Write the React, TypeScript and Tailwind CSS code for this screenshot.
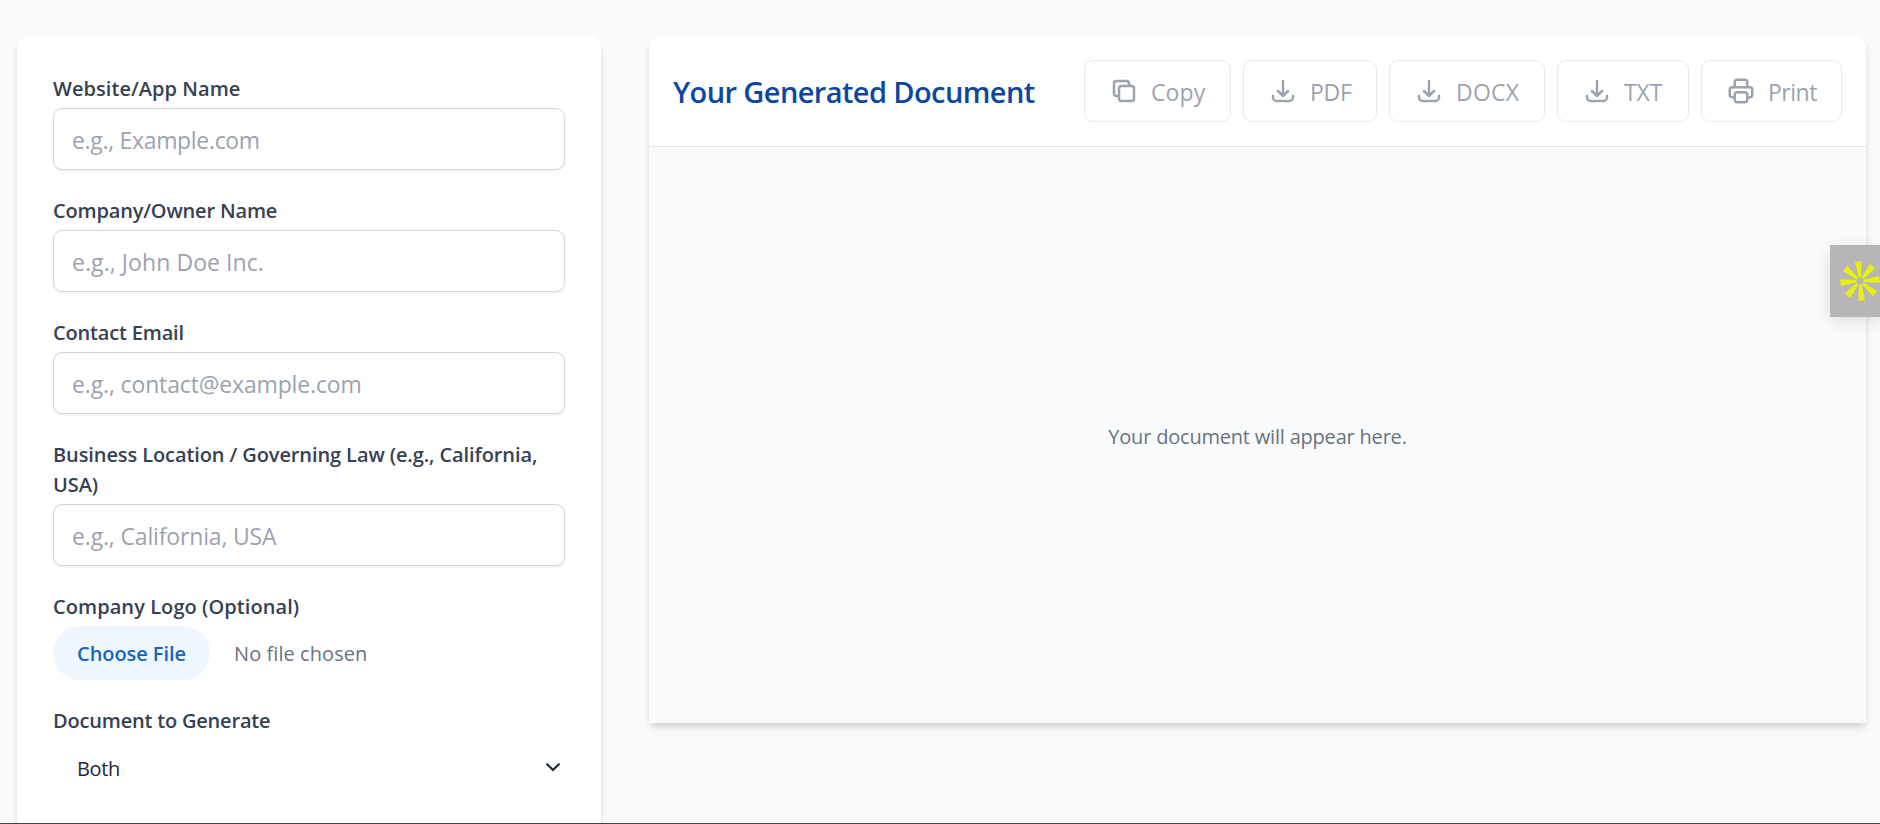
import React from 'react';

const COPY =
  'M8 16H6a2 2 0 01-2-2V6a2 2 0 012-2h8a2 2 0 012 2v2m-6 12h8a2 2 0 002-2v-8a2 2 0 00-2-2h-8a2 2 0 00-2 2v8a2 2 0 002 2z';
const DOWNLOAD = 'M4 16v1a3 3 0 003 3h10a3 3 0 003-3v-1m-4-4l-4 4m0 0l-4-4m4 4V4';
const PRINT =
  'M17 17h2a2 2 0 002-2v-4a2 2 0 00-2-2H5a2 2 0 00-2 2v4a2 2 0 002 2h2m2 4h6a2 2 0 002-2v-4a2 2 0 00-2-2H9a2 2 0 00-2 2v4a2 2 0 002 2zm8-12V5a2 2 0 00-2-2H9a2 2 0 00-2 2v4h10z';

const fields = [
  {
    id: 'site',
    label: 'Website/App Name',
    placeholder: 'e.g., Example.com',
    labelSpacing: 'tracking-[0.05px]',
    spacing: 'tracking-[-0.32px]',
  },
  {
    id: 'owner',
    label: 'Company/Owner Name',
    placeholder: 'e.g., John Doe Inc.',
    labelSpacing: 'tracking-[-0.17px]',
    spacing: 'tracking-[0.07px]',
  },
  {
    id: 'email',
    label: 'Contact Email',
    placeholder: 'e.g., contact@example.com',
    labelSpacing: 'tracking-[-0.17px]',
    spacing: 'tracking-[-0.14px]',
  },
  {
    id: 'location',
    label: 'Business Location / Governing Law (e.g., California, USA)',
    placeholder: 'e.g., California, USA',
    labelSpacing: 'tracking-[-0.1px]',
    spacing: 'tracking-[-0.16px]',
  },
];

const actions = [
  { name: 'Copy', icon: COPY, style: 'w-[147px] tracking-[0.1px]' },
  { name: 'PDF', icon: DOWNLOAD, style: 'w-[134px] tracking-[-0.3px]' },
  { name: 'DOCX', icon: DOWNLOAD, style: 'w-[156px] tracking-[0.2px]' },
  { name: 'TXT', icon: DOWNLOAD, style: 'w-[132px] tracking-[-0.1px]' },
  { name: 'Print', icon: PRINT, style: 'w-[141px] tracking-[-0.5px]' },
];

const labelClass = 'block pt-0.5 -mb-0.5 text-[20px] leading-[30px] font-semibold text-gray-700';

const GeneratorForm: React.FC = () => (
  <form className="w-[584px] h-[900px] shrink-0 flex flex-col gap-6 rounded-xl bg-white p-9 shadow-[0_6px_9px_-1px_rgba(0,0,0,0.1),0_3px_6px_-2px_rgba(0,0,0,0.1)]">
    {fields.map((field) => (
      <div key={field.id}>
        <label htmlFor={field.id} className={`${labelClass} ${field.labelSpacing}`}>
          {field.label}
        </label>
        <input
          id={field.id}
          type="text"
          placeholder={field.placeholder}
          className={`mt-1.5 block h-[62px] w-full rounded-[9px] border border-[#d1d5db] bg-white px-[18px] pt-0.5 text-[23px] shadow-[0_1.5px_3px_rgba(0,0,0,0.05)] placeholder:text-[#9ca3af] ${field.spacing}`}
        />
      </div>
    ))}

    <div>
      <span className={`${labelClass} tracking-[0.07px]`}>Company Logo (Optional)</span>
      <div className="mt-1.5 flex items-center gap-6 text-[20px] leading-[30px]">
        <button
          type="button"
          className="h-[54px] w-[157px] rounded-full bg-[#eff6ff] pt-0.5 font-semibold tracking-[-0.07px] text-[#1565c0]"
        >
          Choose File
        </button>
        <span className="pt-0.5 tracking-[0.07px] text-gray-500">No file chosen</span>
      </div>
    </div>

    <div>
      <span className={`${labelClass} tracking-[-0.19px]`}>Document to Generate</span>
      <div className="mt-1.5 flex h-[54px] items-center justify-between pr-[5px] pl-6 text-[20px] leading-[30px] tracking-[-0.4px] text-gray-800">
        <span className="pt-[3px]">Both</span>
        <svg
          viewBox="0 0 14 9"
          className="h-[9px] w-3.5"
          fill="none"
          stroke="currentColor"
          strokeWidth="2.2"
          strokeLinecap="round"
        >
          <path d="M1.2 1.2L7 7l5.8-5.8" />
        </svg>
      </div>
    </div>
  </form>
);

const DocumentPanel: React.FC = () => (
  <section className="flex h-[687px] w-[1217px] shrink-0 flex-col rounded-t-xl bg-white shadow-[0_6px_9px_-1px_rgba(0,0,0,0.1),0_3px_6px_-2px_rgba(0,0,0,0.1)]">
    <header className="flex items-center justify-between border-b border-gray-200 p-6">
      <h2 className="pt-0.5 text-[29px] leading-[42px] font-semibold tracking-[-0.6px] whitespace-nowrap text-[#0d47a1]">
        Your Generated Document
      </h2>
      <div className="flex gap-3">
        {actions.map((action) => (
          <button
            key={action.name}
            disabled
            className={`flex h-[62px] items-center gap-3 rounded-[9px] border border-[#d1d5db]/50 pl-6 text-[23px] whitespace-nowrap text-[#9ca3af] ${action.style}`}
          >
            <svg
              viewBox="0 0 24 24"
              className="size-[30px] shrink-0"
              fill="none"
              stroke="currentColor"
              strokeWidth="2"
              strokeLinecap="round"
              strokeLinejoin="round"
            >
              <path d={action.icon} />
            </svg>
            <span className="pt-0.5">{action.name}</span>
          </button>
        ))}
      </div>
    </header>
    <div className="flex flex-1 items-center justify-center bg-[#f9fafb]">
      <p className="pt-[3px] text-[20px] leading-[30px] tracking-[-0.2px] text-gray-500">
        Your document will appear here.
      </p>
    </div>
  </section>
);

// Burst logo: eight tapered rays around a small gap
const BurstBadge: React.FC = () => (
  <div className="absolute top-[245px] right-0 h-[72px] w-[50px] overflow-hidden bg-[#b8b5b9] shadow-[0_4px_16px_rgba(0,0,0,0.12)]">
    <svg viewBox="-20 -20 40 40" className="absolute top-4 left-[10px] size-10" fill="#e8f10c">
      {[0, 45, 90, 135, 180, 225, 270, 315].map((angle) => (
        <path key={angle} d="M-5 -19.2L1.6 -19.8L1.3 -5.2Q0.8 -2.4 -1.5 -3.8Z" transform={`rotate(${angle})`} />
      ))}
    </svg>
  </div>
);

const App: React.FC = () => {
  return (
    <div className="relative h-[824px] overflow-hidden border-b border-[#444] bg-[#f9fafb] font-['Open_Sans','Noto_Sans',sans-serif]">
      <main className="flex items-start gap-12 pt-9 pl-[17px]">
        <GeneratorForm />
        <DocumentPanel />
      </main>
      <BurstBadge />
    </div>
  );
};

export default App;
